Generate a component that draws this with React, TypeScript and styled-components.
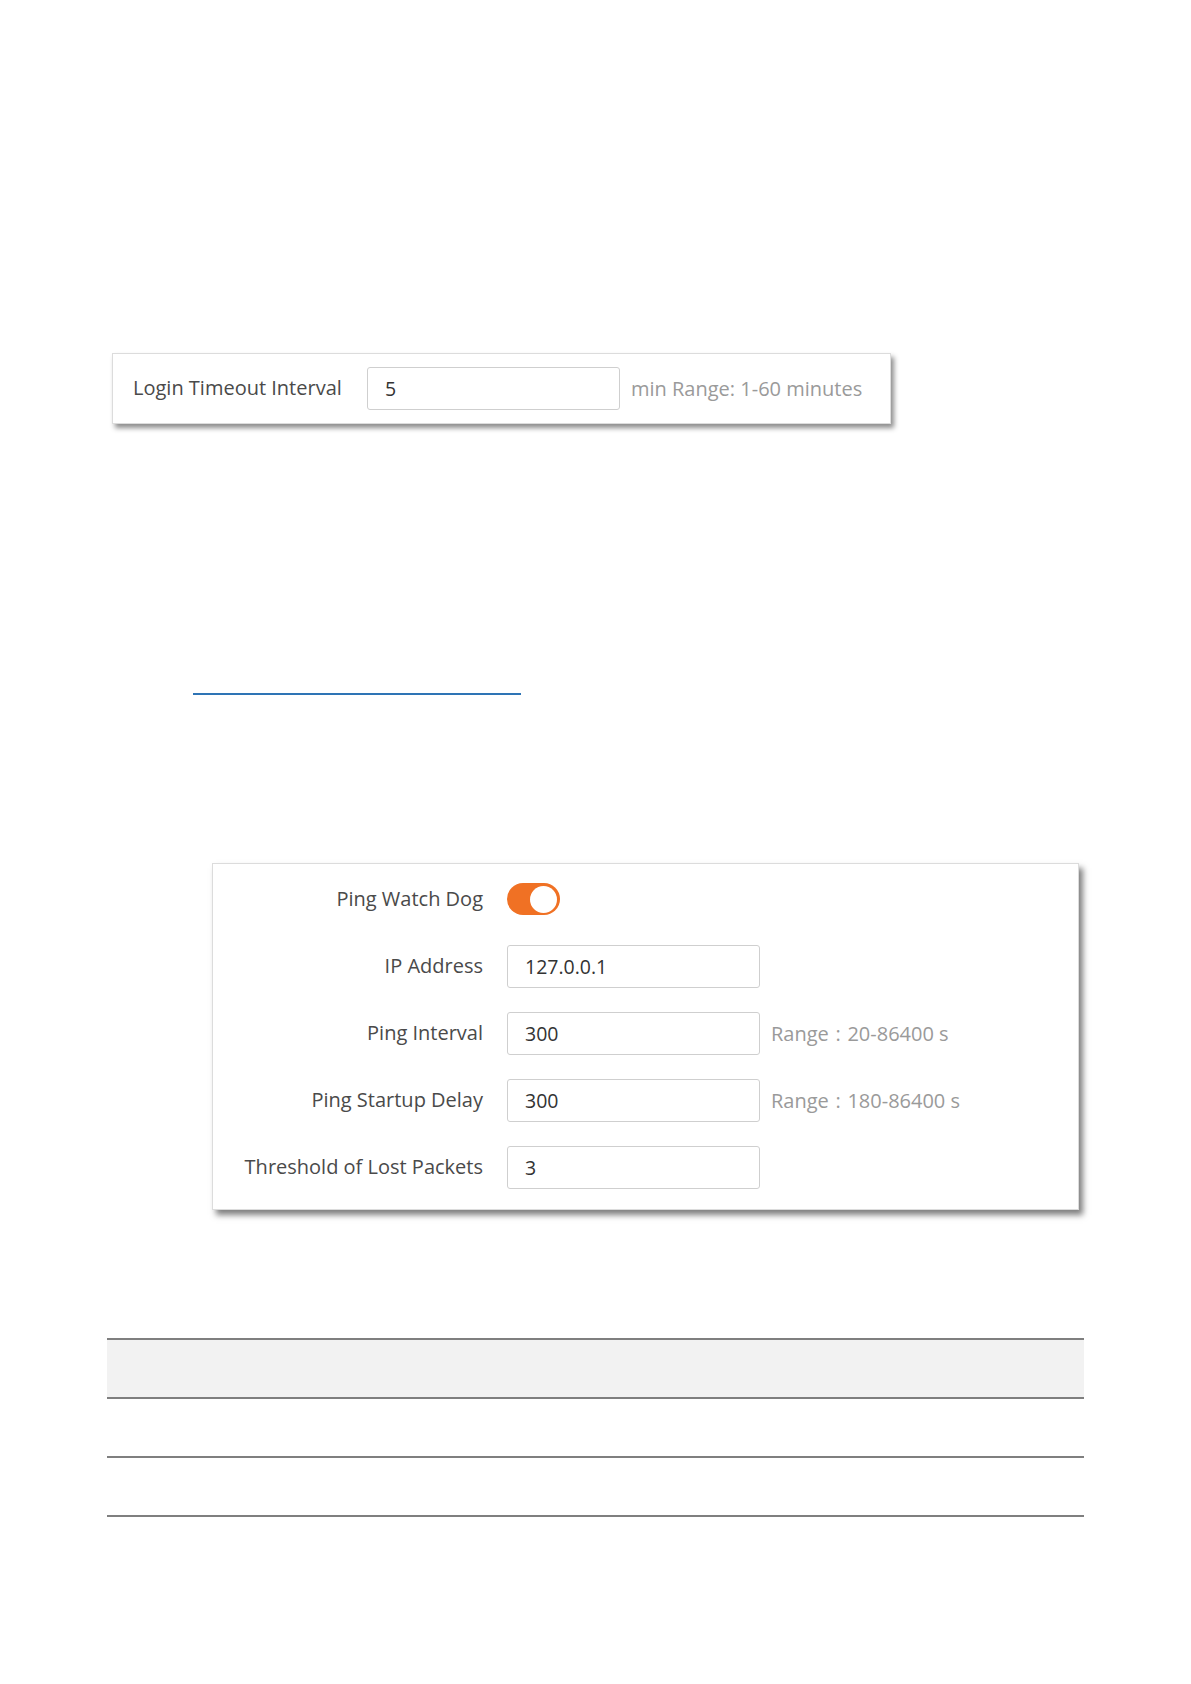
import React from "react";
import styled, { createGlobalStyle } from "styled-components";

const GlobalStyle = createGlobalStyle`
  html, body {
    margin: 0;
    padding: 0;
    background: #ffffff;
  }
  body {
    font-family: "Open Sans", "Liberation Sans", sans-serif;
  }
`;

const Page = styled.div`
  width: 1191px;
  min-height: 1684px;
  display: flex;
  flex-direction: column;
`;

const LoginCard = styled.div`
  margin: 353px 0 0 112px;
  width: 779px;
  height: 71px;
  box-sizing: border-box;
  border: 1px solid #dcdcdc;
  box-shadow: 3px 4px 5px rgba(0, 0, 0, 0.45);
  display: flex;
  align-items: center;
  padding-left: 20px;
`;

const LoginLabel = styled.span`
  width: 234px;
  font-size: 20px;
  color: #4a4a4a;
  margin-top: -2px;
`;

const TextBox = styled.div`
  width: 253px;
  height: 43px;
  box-sizing: border-box;
  border: 1px solid #cfcfcf;
  border-radius: 3px;
  display: flex;
  align-items: center;
  padding-left: 17px;
  font-size: 19.5px;
  color: #333333;
`;

const Hint = styled.span`
  margin-left: 11px;
  font-size: 20px;
  color: #9a9a9a;
`;

const LinkLine = styled.div`
  margin: 269px 0 0 193px;
  width: 328px;
  height: 2px;
  background: #2e74b5;
`;

const PingCard = styled.div`
  margin: 168px 0 0 212px;
  width: 867px;
  height: 347px;
  box-sizing: border-box;
  border: 1px solid #dcdcdc;
  box-shadow: 4px 5px 6px rgba(0, 0, 0, 0.5);
  padding: 19px 0 0 0;
  display: flex;
  flex-direction: column;
  gap: 24px;
`;

const Row = styled.div`
  display: grid;
  grid-template-columns: 270px auto auto;
  column-gap: 24px;
  align-items: center;
  height: 43px;
`;

const FirstRow = styled(Row)`
  height: 32px;
  margin-bottom: 6px;
`;

const RowLabel = styled.span`
  text-align: right;
  font-size: 20px;
  color: #4a4a4a;
  margin-top: -2px;
`;

const Field = styled.div`
  display: flex;
  align-items: center;
`;

const Toggle = styled.div<{ on: boolean }>`
  width: 53px;
  height: 32px;
  border-radius: 16px;
  box-sizing: border-box;
  background: ${({ on }) => (on ? "#f07124" : "#cccccc")};
  display: flex;
  align-items: center;
  justify-content: ${({ on }) => (on ? "flex-end" : "flex-start")};
  padding: 0 3px;
`;

const Knob = styled.div`
  width: 27px;
  height: 27px;
  border-radius: 50%;
  background: #ffffff;
`;

const Table = styled.div`
  margin: 128px 0 0 107px;
  width: 977px;
  border-top: 2px solid #7f7f7f;
`;

const TableRow = styled.div<{ head?: boolean }>`
  height: 57px;
  background: ${({ head }) => (head ? "#f2f2f2" : "#ffffff")};
  border-bottom: 2px solid #7f7f7f;
`;

const pingRows = [
  { label: "IP Address", value: "127.0.0.1" },
  { label: "Ping Interval", value: "300", hint: "Range\u2004:\u200420-86400 s" },
  { label: "Ping Startup Delay", value: "300", hint: "Range\u2004:\u2004180-86400 s" },
  { label: "Threshold of Lost Packets", value: "3" },
];

const App: React.FC = () => {
  return (
    <Page>
      <GlobalStyle />
      <LoginCard>
        <LoginLabel>Login Timeout Interval</LoginLabel>
        <TextBox>5</TextBox>
        <Hint>min Range: 1-60 minutes</Hint>
      </LoginCard>

      <LinkLine />

      <PingCard>
        <FirstRow>
          <RowLabel>Ping Watch Dog</RowLabel>
          <Toggle on>
            <Knob />
          </Toggle>
        </FirstRow>
        {pingRows.map((r) => (
          <Row key={r.label}>
            <RowLabel>{r.label}</RowLabel>
            <Field>
              <TextBox>{r.value}</TextBox>
              {r.hint && <Hint>{r.hint}</Hint>}
            </Field>
          </Row>
        ))}
      </PingCard>

      <Table>
        <TableRow head />
        <TableRow />
        <TableRow />
      </Table>
    </Page>
  );
};

export default App;
